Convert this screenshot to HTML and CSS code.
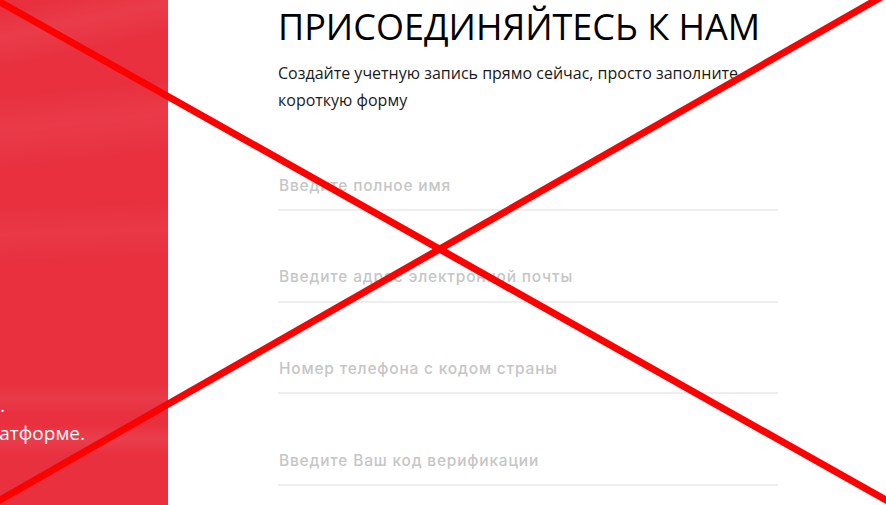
FILE: index.html
```html
<!DOCTYPE html>
<html lang="ru">
<head>
<meta charset="utf-8">
<title>Присоединяйтесь к нам</title>
<link rel="stylesheet" href="styles.css">
</head>
<body>
<div class="page">
  <aside class="promo">
    <div class="promo-text">
      <div class="promo-line promo-line-1"><span>Присоединяйтесь к тысячам трейдеров.</span></div>
      <div class="promo-line promo-line-2"><span>Начните торговать на нашей платформе.</span></div>
    </div>
  </aside>
  <main class="signup">
    <h1 class="title">ПРИСОЕДИНЯЙТЕСЬ К НАМ</h1>
    <p class="lead">Создайте учетную запись прямо сейчас, просто заполните короткую форму</p>
    <form class="form">
      <input class="field" type="text" placeholder="Введите полное имя">
      <input class="field" type="email" placeholder="Введите адрес электронной почты">
      <input class="field" type="tel" placeholder="Номер телефона с кодом страны">
      <input class="field" type="text" placeholder="Введите Ваш код верификации">
    </form>
  </main>
</div>
<svg class="cross" viewBox="0 0 886 505" preserveAspectRatio="none" aria-hidden="true">
  <line x1="-10" y1="-3.6" x2="896" y2="505.6" stroke="#ff0000" stroke-width="7"/>
  <line x1="886" y1="-5.7" x2="-10" y2="505.7" stroke="#ff0000" stroke-width="7"/>
</svg>
</body>
</html>
```
FILE: styles.css
```css
html, body {
  margin: 0;
  padding: 0;
  height: 100%;
  overflow: hidden;
  background: #ffffff;
}
body {
  font-family: "Open Sans", "Liberation Sans", sans-serif;
}
.page {
  display: flex;
  height: 505px;
}
.promo {
  width: 168px;
  flex: none;
  overflow: hidden;
  display: flex;
  flex-direction: column;
  justify-content: flex-end;
  padding-bottom: 58px;
  box-sizing: border-box;
  background-color: #e8303f;
  background-image:
    linear-gradient(168deg, rgba(255,255,255,0) 2%, rgba(255,255,255,0.06) 7%, rgba(255,255,255,0) 13%),
    linear-gradient(174deg, rgba(255,255,255,0) 18%, rgba(255,255,255,0.05) 25%, rgba(255,255,255,0) 33%),
    linear-gradient(178deg, rgba(255,255,255,0) 40%, rgba(255,255,255,0.04) 46%, rgba(255,255,255,0) 52%),
    linear-gradient(180deg, rgba(255,255,255,0) 76%, rgba(255,255,255,0.05) 79%, rgba(255,255,255,0) 82%),
    linear-gradient(180deg, rgba(255,255,255,0) 84%, rgba(255,255,255,0.07) 87%, rgba(255,255,255,0) 90%);
}
.promo-text {
  color: #ffffff;
  font-size: 19px;
  line-height: 28px;
}
.promo-line {
  display: flex;
  justify-content: flex-end;
  white-space: nowrap;
}
.promo-line-1 { width: 5px; }
.promo-line-2 { width: 85px; }
.signup {
  padding-left: 110px;
  width: 500px;
  flex: none;
}
.title {
  margin: 4px 0 0;
  font-size: 36px;
  font-weight: 400;
  line-height: 46px;
  color: #000000;
}
.lead {
  margin: 10px 0 0;
  font-size: 16px;
  line-height: 27px;
  color: #1a1a1a;
  max-width: 470px;
}
.form {
  display: flex;
  flex-direction: column;
  gap: 41.7px;
  margin-top: 47px;
}
.field {
  display: block;
  width: 500px;
  height: 50px;
  box-sizing: border-box;
  padding: 0 0 0 1px;
  margin: 0;
  border: 0;
  border-bottom: 2px solid #eeeeee;
  background: transparent;
  font-family: "Inter", "DejaVu Sans", sans-serif;
  font-size: 15.5px;
  font-weight: 500;
  letter-spacing: 0.8px;
  color: #333333;
  outline: none;
}
.field::placeholder {
  color: #c6c6c6;
  opacity: 1;
}
.cross {
  position: fixed;
  left: 0;
  top: 0;
  width: 886px;
  height: 505px;
  pointer-events: none;
}
```
